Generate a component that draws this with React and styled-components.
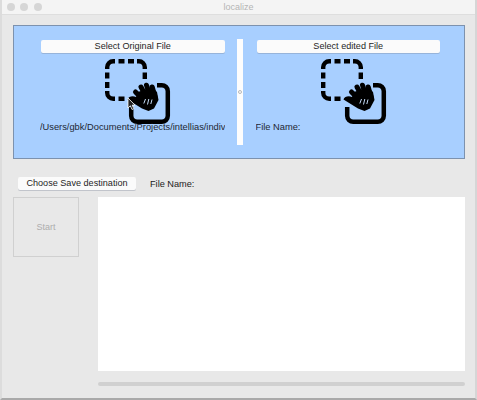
import React from 'react'
import styled, { createGlobalStyle } from 'styled-components'

const GlobalStyle = createGlobalStyle`
  html, body {
    margin: 0;
    padding: 0;
    background: #e8e8e8;
    overflow: hidden;
  }
  body {
    font-family: "Liberation Sans", Arial, sans-serif;
  }
`

const Window = styled.div`
  position: relative;
  box-sizing: border-box;
  width: 477px;
  height: 400px;
  display: flex;
  flex-direction: column;
  background: #e8e8e8;
  border-left: 2px solid #dcdcdc;
  border-right: 2px solid #d6d6d6;
  border-bottom: 2px solid #a9a9a9;
`

const TitleBar = styled.div`
  position: relative;
  flex: none;
  height: 14px;
  display: flex;
  align-items: center;
  justify-content: center;
  background: #f4f4f4;
  border-bottom: 1px solid #dedede;
  font-size: 9px;
  color: #b4b4b4;
`

const Lights = styled.div`
  position: absolute;
  left: 5px;
  top: 3px;
  display: flex;
  gap: 5.3px;
`

const Light = styled.span`
  width: 8px;
  height: 8px;
  border-radius: 50%;
  background: #d6d6d6;
`

const DropPanel = styled.div`
  box-sizing: border-box;
  flex: none;
  display: flex;
  height: 134px;
  margin: 10px 10px 0 11px;
  background: #a8cfff;
  border: 1px solid #7d92ae;
`

const Pane = styled.div`
  flex: 1 0 0;
  min-width: 0;
  display: flex;
  flex-direction: column;
  padding: 14px ${p => p.$right}px 0 ${p => p.$left}px;
`

const FlatButton = styled.div`
  box-sizing: border-box;
  flex: none;
  display: flex;
  align-items: center;
  justify-content: center;
  height: 13px;
  padding-bottom: 1px;
  background: #fbfbfb;
  border-radius: 2px;
  box-shadow: 0 1px 0 rgba(120, 130, 150, 0.35);
  font-size: 9.1px;
  color: #1f1f1f;
  white-space: nowrap;
`

const DropIcon = styled.svg`
  flex: none;
  display: block;
  align-self: flex-start;
  margin: 6px 0 0 64px;
`

const PathLabel = styled.div`
  margin: -4px 0 0 -1px;
  height: 12px;
  line-height: 12px;
  font-size: 9.3px;
  color: #1e2733;
  white-space: nowrap;
  overflow: hidden;
`

const Splitter = styled.div`
  flex: none;
  width: 6px;
  height: 106px;
  margin-top: 13px;
  background: #fdfdfd;
  display: flex;
  align-items: center;
  justify-content: center;
`

const SplitHandle = styled.span`
  width: 4px;
  height: 4px;
  border-radius: 50%;
  border: 1px solid #b9b9b9;
  box-sizing: border-box;
`

const SaveRow = styled.div`
  flex: none;
  display: flex;
  align-items: center;
  gap: 14px;
  margin: 18px 0 0 16px;
  height: 13px;
`

const SaveButton = styled(FlatButton)`
  width: 118px;
`

const SaveLabel = styled.span`
  font-size: 9.2px;
  color: #222;
`

const Lower = styled.div`
  flex: 1;
  display: flex;
  gap: 19px;
  margin: 7px 10px 0 11px;
  min-height: 0;
`

const StartButton = styled.div`
  box-sizing: border-box;
  flex: none;
  width: 66px;
  height: 60px;
  display: flex;
  align-items: center;
  justify-content: center;
  border: 1px solid #d0d0d0;
  font-size: 9px;
  color: #adadad;
`

const LogColumn = styled.div`
  flex: 1;
  display: flex;
  flex-direction: column;
`

const LogArea = styled.div`
  height: 174px;
  background: #ffffff;
`

const ProgressTrack = styled.div`
  height: 4px;
  margin-top: 11px;
  background: #d0d0d0;
  border-radius: 2px;
`

const PointerMark = styled.svg`
  position: absolute;
  left: 125px;
  top: 97px;
`

const DragDropIcon = () => (
  <DropIcon width="66" height="66" viewBox="0 0 66 66">
    <path
      d="M2.2 10V8.2a6 6 0 0 1 6-6H10 M13.5 2.2H19.5 M23 2.2H29 M32 2.2H33.8a6 6 0 0 1 6 6V10 M39.8 13.5V20 M2.2 13.5V19.5 M2.2 23V29 M2.2 32V33.8a6 6 0 0 0 6 6H10 M13.5 39.8H19.5"
      fill="none"
      stroke="#000"
      strokeWidth="4.4"
    />
    <path
      d="M52 26.2H56.8a6 6 0 0 1 6 6V56.8a6 6 0 0 1-6 6H32.2a6 6 0 0 1-6-6V48"
      fill="none"
      stroke="#000"
      strokeWidth="4.5"
    />
    <path d="M22.5 40.5C23.5 37.5 27.5 36.5 31 38L33 33 47 28 52 33 53.5 41 49 49.5 43.5 52 37 49.5z" fill="#000" />
    <g fill="none" stroke="#000" strokeWidth="5" strokeLinecap="round">
      <path d="M30.5 33 37.5 40" />
      <path d="M36 28 41.5 38" />
      <path d="M41.5 26.2 45.5 38" />
      <path d="M47.2 28 50 38" />
    </g>
    <g fill="none" stroke="#c4dcf8" strokeWidth="1">
      <path d="M40.5 40 38.8 44.5" />
      <path d="M43.8 40 42.5 45.5" />
      <path d="M47 40.5 45.8 45" />
    </g>
  </DropIcon>
)

const App = () => {
  return (
    <Window>
      <GlobalStyle />
      <TitleBar>
        <Lights>
          <Light />
          <Light />
          <Light />
        </Lights>
        localize
      </TitleBar>

      <DropPanel>
        <Pane $left={27} $right={12}>
          <FlatButton>Select Original File</FlatButton>
          <DragDropIcon />
          <PathLabel>/Users/gbk/Documents/Projects/intellias/individual</PathLabel>
        </Pane>
        <Splitter>
          <SplitHandle />
        </Splitter>
        <Pane $left={14} $right={24}>
          <FlatButton>Select edited File</FlatButton>
          <DragDropIcon />
          <PathLabel>File Name:</PathLabel>
        </Pane>
      </DropPanel>

      <SaveRow>
        <SaveButton>Choose Save destination</SaveButton>
        <SaveLabel>File Name:</SaveLabel>
      </SaveRow>

      <Lower>
        <StartButton>Start</StartButton>
        <LogColumn>
          <LogArea />
          <ProgressTrack />
        </LogColumn>
      </Lower>

      <PointerMark width="9" height="14" viewBox="0 0 9 14">
        <path d="M1 1v10l2.4-2.2L5 12.5l1.8-.8-1.6-3.6H8z" fill="#222" stroke="#fff" strokeWidth="0.8" />
      </PointerMark>
    </Window>
  )
}

export default App
